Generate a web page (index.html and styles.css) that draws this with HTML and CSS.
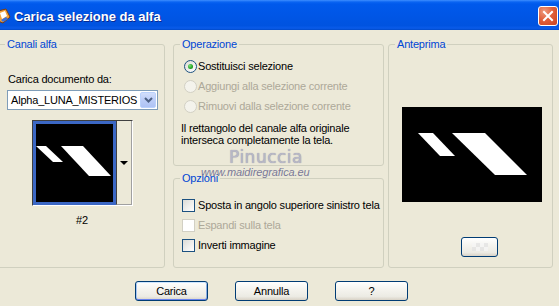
FILE: index.html
```html
<!DOCTYPE html>
<html>
<head>
<meta charset="utf-8">
<title>Carica selezione da alfa</title>
<link rel="stylesheet" href="styles.css">
</head>
<body>
<div class="window">
  <div class="titlebar">
    <svg class="appicon" width="11" height="16" viewBox="0 0 11 16">
      <path d="M-2 3 L6 1 L10 9 L3 15 L-2 13 Z" fill="#F3A23A" stroke="#7A3B10" stroke-width="1"/>
      <path d="M0 5 L5 3 L7 8 L2 11 Z" fill="#FFFFFF"/>
      <path d="M1 12 L6 9 L8 11 L3 14 Z" fill="#3A6FD8"/>
    </svg>
    <span class="title">Carica selezione da alfa</span>
    <div class="close">
      <svg width="12" height="12" viewBox="0 0 12 12"><path d="M2 2 L10 10 M10 2 L2 10" stroke="#FFFFFF" stroke-width="2" stroke-linecap="square"/></svg>
    </div>
  </div>

  <div class="content">
    <fieldset class="group g-canali">
      <legend>Canali alfa</legend>
      <div class="lbl">Carica documento da:</div>
      <div class="combo">
        <span class="combo-text">Alpha_LUNA_MISTERIOS</span>
        <span class="combo-btn">
          <svg width="9" height="6" viewBox="0 0 9 6"><path d="M1 1 L4.5 4.5 L8 1" fill="none" stroke="#4D6185" stroke-width="2"/></svg>
        </span>
      </div>
      <div class="thumbblock">
        <div class="thumbctl">
          <div class="thumb">
            <svg width="77" height="77" viewBox="0 0 77 77">
              <polygon points="0,22 10,22 27,38 17,38" fill="#FFFFFF"/>
              <polygon points="25,22 47,22 75,52 53,52" fill="#FFFFFF"/>
            </svg>
          </div>
          <div class="thumbdrop"><span class="tri"></span></div>
        </div>
        <div class="thumbname">#2</div>
      </div>
    </fieldset>

    <div class="midcol">
      <fieldset class="group g-op">
        <legend>Operazione</legend>
        <div class="opt first"><span class="radio checked"></span>Sostituisci selezione</div>
        <div class="opt disabled"><span class="radio"></span>Aggiungi alla selezione corrente</div>
        <div class="opt disabled"><span class="radio"></span>Rimuovi dalla selezione corrente</div>
        <p class="note">Il rettangolo del canale alfa originale<br>interseca completamente la tela.</p>
      </fieldset>
      <fieldset class="group g-opz">
        <legend>Opzioni</legend>
        <div class="opt first"><span class="check"></span>Sposta in angolo superiore sinistro tela</div>
        <div class="opt disabled"><span class="check"></span>Espandi sulla tela</div>
        <div class="opt"><span class="check"></span>Inverti immagine</div>
      </fieldset>
    </div>

    <fieldset class="group g-ante">
      <legend>Anteprima</legend>
      <div class="preview">
        <svg width="140" height="95" viewBox="0 0 140 95">
          <polygon points="16,26 31,26 53,49 38,49" fill="#FFFFFF"/>
          <polygon points="50,26 83,26 125,68 93,68" fill="#FFFFFF"/>
        </svg>
      </div>
      <div class="xpbtn mini"><span class="checker"></span></div>
    </fieldset>
  </div>

  <div class="buttons">
    <button class="xpbtn default">Carica</button>
    <button class="xpbtn">Annulla</button>
    <button class="xpbtn">?</button>
  </div>

  <span class="wm1">Pinuccia</span>
  <span class="wm2">www.maidiregrafica.eu</span>
</div>
</body>
</html>
```

FILE: styles.css
```css
* { box-sizing: border-box; }
html, body { margin: 0; padding: 0; }
body {
  width: 559px;
  height: 306px;
  overflow: hidden;
  background: #ECE9D8;
  font-family: "Liberation Sans", Arial, sans-serif;
  font-size: 11px;
  letter-spacing: -0.2px;
  color: #000;
}
.window {
  position: relative;
  width: 559px;
  height: 306px;
  background: #ECE9D8;
}

/* title bar */
.titlebar {
  height: 30px;
  display: flex;
  align-items: center;
  background: linear-gradient(180deg, #3D8EFF 0px, #0A64F2 2px, #0059EC 4px, #0056E6 50%, #0053E0 85%, #0A5BE9 94%, #0049C8 100%);
}
.appicon { flex: none; margin-top: 2px; }
.title {
  margin-left: 3px;
  padding-top: 2px;
  color: #FFFFFF;
  font-weight: bold;
  font-size: 13px;
  letter-spacing: 0;
  text-shadow: 1px 1px 0 #0B2A8F;
}
.close {
  margin-left: auto;
  margin-right: 1px;
  margin-top: 2px;
  width: 20px;
  height: 20px;
  border: 1px solid #FFFFFF;
  border-radius: 3px;
  background: radial-gradient(circle at 30% 25%, #EE9B7E 0%, #E0603C 45%, #C9421E 100%);
  display: flex;
  align-items: center;
  justify-content: center;
}

/* content */
.content {
  display: flex;
  align-items: flex-start;
  padding-top: 8px;
}
.group {
  margin: 0;
  padding: 0;
  border: 1px solid #D0D0BF;
  border-radius: 3px;
  min-width: 0;
}
.group legend {
  padding: 0 2px;
  margin-left: 6px;
  color: #0046D5;
  line-height: 13px;
}
.g-canali {
  width: 168px;
  height: 230px;
  margin-left: -3px;
}
.g-canali legend { margin-left: 7px; }
.lbl {
  margin: 22px 0 0 10px;
  line-height: 13px;
}
.combo {
  margin: 4px 0 0 9px;
  width: 151px;
  height: 20px;
  border: 1px solid #7F9DB9;
  background: #FFFFFF;
  display: flex;
  align-items: center;
  padding: 1px;
}
.combo-text {
  flex: 1;
  padding-left: 2px;
  line-height: 13px;
  white-space: nowrap;
  overflow: hidden;
}
.combo-btn {
  width: 16px;
  height: 16px;
  border: 1px solid #BAD1FC;
  border-radius: 2px;
  background: linear-gradient(180deg, #D2DEFB 0%, #BCCDF7 50%, #AEC3F5 100%);
  display: flex;
  align-items: center;
  justify-content: center;
}
.thumbblock {
  margin: 10px 0 0 34px;
  width: 100px;
  display: flex;
  flex-direction: column;
  align-items: center;
}
.thumbctl {
  display: flex;
  border-top: 1px solid #404040;
  border-left: 1px solid #404040;
  border-right: 1px solid #FFFFFF;
  border-bottom: 1px solid #FFFFFF;
}
.thumb {
  width: 83px;
  height: 84px;
  background: #000;
  border: 3px solid #3B67C4;
}
.thumb svg { display: block; }
.thumbdrop {
  width: 16px;
  border-right: 1px solid #A0A0A0;
  border-bottom: 1px solid #A0A0A0;
  border-left: 1px solid #404040;
  display: flex;
  align-items: center;
  justify-content: center;
}
.tri {
  width: 0;
  height: 0;
  border-left: 4px solid transparent;
  border-right: 4px solid transparent;
  border-top: 4px solid #000;
}
.thumbname {
  margin-top: 8px;
  line-height: 13px;
}

/* middle column */
.midcol {
  margin-left: 8px;
  width: 211px;
  display: flex;
  flex-direction: column;
  gap: 6px;
}
.g-op { width: 211px; height: 128px; }
.g-opz { width: 211px; height: 96px; }
.opt {
  height: 20px;
  display: flex;
  align-items: center;
  white-space: nowrap;
}
.g-op .opt.first { margin-top: 5px; }
.g-opz .opt.first { margin-top: 10px; }
.opt.disabled { color: #ACA899; }
.radio {
  position: relative;
  flex: none;
  width: 13px;
  height: 13px;
  margin-left: 10px;
  margin-right: 1px;
  border: 1px solid #1C5180;
  border-radius: 50%;
  background: linear-gradient(135deg, #DCDCD7 0%, #FFFFFF 100%);
}
.radio.checked::after {
  content: "";
  position: absolute;
  left: 3px;
  top: 3px;
  width: 5px;
  height: 5px;
  border-radius: 50%;
  background: radial-gradient(circle at 35% 35%, #7BE07B 0%, #21A121 60%, #1A8C1A 100%);
}
.opt.disabled .radio {
  border-color: #D2D0C4;
  background: #F4F3EC;
}
.note {
  margin: 6px 0 0 7px;
  line-height: 12px;
}
.check {
  flex: none;
  width: 13px;
  height: 13px;
  margin-left: 8px;
  margin-right: 3px;
  border: 1px solid #1C5180;
  background: linear-gradient(135deg, #DCDCD7 0%, #FFFFFF 100%);
}
.opt.disabled .check {
  border-color: #D2D0C4;
  background: #FFFFFF;
}

/* preview */
.g-ante {
  margin-left: 4px;
  width: 165px;
  height: 230px;
}
.preview {
  margin: 56px 0 0 13px;
  width: 140px;
  height: 95px;
  background: #000;
}
.preview svg { display: block; }

/* buttons */
.xpbtn {
  font: inherit;
  letter-spacing: -0.2px;
  color: #000;
  width: 73px;
  height: 20px;
  padding: 0;
  border: 1px solid #003C74;
  border-radius: 3px;
  background: linear-gradient(180deg, #FFFFFF 0%, #F5F4EF 40%, #ECEBE4 80%, #D8D2C6 100%);
  display: flex;
  align-items: center;
  justify-content: center;
}
.xpbtn.default {
  box-shadow: inset 0 1px 0 #CEE7FF, inset 0 -1px 0 #6982EE, inset 1px 0 0 #A8C6F4, inset -1px 0 0 #89ADE4;
}
.xpbtn.mini {
  margin: 35px 0 0 72px;
  width: 37px;
  height: 20px;
}
.checker {
  width: 16px;
  height: 8px;
  background-color: #F6F6F6;
  background-image: conic-gradient(#E2E2E2 25%, transparent 0 50%, #E2E2E2 0 75%, transparent 0);
  background-size: 8px 8px;
  opacity: 0.7;
}
.buttons {
  display: flex;
  gap: 27px;
  padding-left: 135px;
  margin-top: 13px;
}

/* watermark overlay */
.wm1 {
  position: absolute;
  left: 229px;
  top: 147px;
  font-family: "DejaVu Sans", sans-serif;
  font-size: 17px;
  line-height: 20px;
  letter-spacing: 0.5px;
  color: #B8B8C6;
  text-shadow: 0 0 1px #8C8CA2;
}
.wm2 {
  position: absolute;
  left: 201px;
  top: 166px;
  font-style: italic;
  font-size: 11px;
  line-height: 13px;
  letter-spacing: -0.1px;
  color: #7A7A98;
}
```
